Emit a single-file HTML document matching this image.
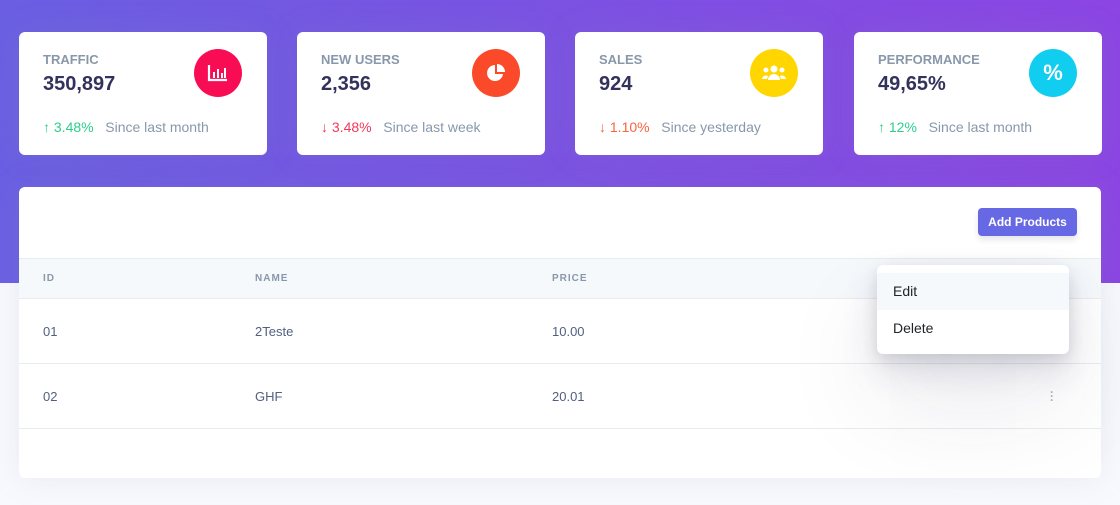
<!DOCTYPE html>
<html><head><style>
*{box-sizing:border-box;margin:0;padding:0}
body{width:1120px;height:505px;overflow:hidden;background:#f8f9fe;font-family:"Liberation Sans",sans-serif;position:relative}
.bg{position:absolute;left:0;top:0;width:1120px;height:283px;background:linear-gradient(87deg,#6a5fe2 0%,#8c45e3 100%)}
.stat{position:absolute;top:32px;width:248px;height:123px;background:#fff;border-radius:6px;box-shadow:0 0 2rem 0 rgba(136,152,170,.15)}
.stat .t{position:absolute;left:24px;top:20px;font-size:13px;color:#8898aa;font-weight:bold}
.stat .v{position:absolute;left:24px;top:41px;font-size:20px;color:#32325d;font-weight:bold}
.stat .ic{position:absolute;left:175px;top:17px;width:48px;height:48px;border-radius:50%;display:flex;align-items:center;justify-content:center;color:#fff;font-weight:bold;font-size:22px}
.stat .f{position:absolute;left:24px;top:87px;font-size:14px;color:#8898aa}
.stat .f b{font-weight:bold}
.up{color:#2dce89}.dn{color:#f5365c}.dn2{color:#fb6340}
.card{position:absolute;left:19px;top:187px;width:1082px;height:291px;background:#fff;border-radius:6px;box-shadow:0 0 2rem 0 rgba(136,152,170,.15);overflow:visible}
.btn{position:absolute;left:959px;top:21px;width:99px;height:28px;background:#6768e3;border-radius:4px;color:#fff;font-size:12px;font-weight:bold;text-align:center;line-height:28px;box-shadow:0 4px 6px rgba(50,50,93,.11)}
.th{position:absolute;left:0;top:71px;width:1082px;height:41px;background:#f6f9fc;border-top:1px solid #e9ecef;border-bottom:1px solid #e9ecef}
.th span{position:absolute;top:14px;font-size:10px;letter-spacing:1px;color:#8898aa;font-weight:bold}
.row{position:absolute;left:0;width:1082px;height:65px;border-bottom:1px solid #e9ecef}
.row span{position:absolute;top:25px;font-size:13px;color:#525f7f}
.menu{position:absolute;left:877px;top:265px;width:192px;height:89px;background:#fff;border-radius:6px;box-shadow:0 50px 100px rgba(50,50,93,.1),0 15px 35px rgba(50,50,93,.15),0 5px 15px rgba(0,0,0,.1)}
.menu div{position:absolute;left:0;width:192px;height:37px;padding-left:16px;line-height:37px;font-size:14px;color:#212529}
</style></head><body>
<div class="bg"></div>
<div class="stat" style="left:19px"><div class="t">TRAFFIC</div><div class="v">350,897</div>
<div class="ic" style="background:#f80d55"><svg width="22" height="20" viewBox="0 0 22 20"><path d="M2 2v15h18" stroke="#fff" stroke-width="2.2" fill="none"/><rect x="6" y="9" width="2" height="6" fill="#fff"/><rect x="10" y="6" width="2" height="9" fill="#fff"/><rect x="14" y="10" width="2" height="5" fill="#fff"/><rect x="17" y="5" width="2" height="10" fill="#fff"/></svg></div>
<div class="f"><span class="up"><b>↑</b> 3.48%</span>&nbsp;&nbsp; Since last month</div></div>
<div class="stat" style="left:297px"><div class="t">NEW USERS</div><div class="v">2,356</div>
<div class="ic" style="background:#fb4a2a"><svg width="20" height="20" viewBox="0 0 20 20"><path d="M9 2a8 8 0 1 0 8 9H9z" fill="#fff"/><path d="M11 1v8h8a8 8 0 0 0-8-8z" fill="#fff"/></svg></div>
<div class="f"><span class="dn"><b>↓</b> 3.48%</span>&nbsp;&nbsp; Since last week</div></div>
<div class="stat" style="left:575px"><div class="t">SALES</div><div class="v">924</div>
<div class="ic" style="background:#ffd600"><svg width="26" height="18" viewBox="0 0 26 18"><circle cx="13" cy="5" r="3.5" fill="#fff"/><circle cx="5" cy="6" r="2.5" fill="#fff"/><circle cx="21" cy="6" r="2.5" fill="#fff"/><path d="M7 16a6 6 0 0 1 12 0z" fill="#fff"/><path d="M1 15a4 4 0 0 1 6-3l-1 3z" fill="#fff"/><path d="M25 15a4 4 0 0 0-6-3l1 3z" fill="#fff"/></svg></div>
<div class="f"><span class="dn2"><b>↓</b> 1.10%</span>&nbsp;&nbsp; Since yesterday</div></div>
<div class="stat" style="left:854px"><div class="t">PERFORMANCE</div><div class="v">49,65%</div>
<div class="ic" style="background:#11cdef">%</div>
<div class="f"><span class="up"><b>↑</b> 12%</span>&nbsp;&nbsp; Since last month</div></div>
<div class="card">
<div class="btn">Add Products</div>
<div class="th"><span style="left:24px">ID</span><span style="left:236px">NAME</span><span style="left:533px">PRICE</span></div>
<div class="row" style="top:112px"><span style="left:24px">01</span><span style="left:236px">2Teste</span><span style="left:533px">10.00</span></div>
<div class="row" style="top:177px"><span style="left:24px">02</span><span style="left:236px">GHF</span><span style="left:533px">20.01</span><span style="left:1031px;top:26px;color:#adb5bd;font-size:12px;line-height:4px;font-weight:bold">·<br>·<br>·</span></div>
</div>
<div class="menu"><div style="top:8px;background:#f6f9fc">Edit</div><div style="top:45px">Delete</div></div>
</body></html>
